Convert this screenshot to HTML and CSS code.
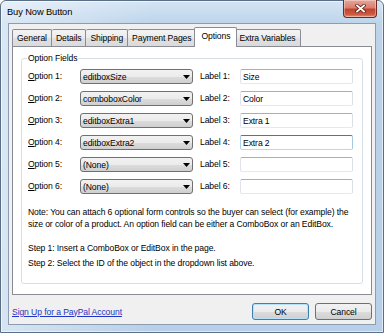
FILE: index.html
```html
<!DOCTYPE html>
<html lang="en">
<head>
    <meta charset="UTF-8">
    <title>Buy Now Button</title>
    <link rel="stylesheet" href="styles.css">
</head>
<body>
    <div class="window">
        <div class="titlebar">
            <span class="title">Buy Now Button</span>
            <div class="close">
                <svg width="11" height="9" viewBox="0 0 11 9">
                    <path d="M2 1.5L9 7.5M9 1.5L2 7.5" stroke="#5a2018" stroke-width="3.4" stroke-linecap="square"/>
                    <path d="M2 1.5L9 7.5M9 1.5L2 7.5" stroke="#fff" stroke-width="1.8" stroke-linecap="square"/>
                </svg>
            </div>
        </div>
        <div class="client">
            <div class="tabs">
                <div class="tab">General</div>
                <div class="tab">Details</div>
                <div class="tab">Shipping</div>
                <div class="tab">Payment Pages</div>
                <div class="tab active">Options</div>
                <div class="tab">Extra Variables</div>
            </div>
            <div class="panel">
                <fieldset class="group">
                    <legend>Option Fields</legend>
                    <div class="rows">
                        <label><u>O</u>ption 1:</label>
                        <div class="combo"><span>editboxSize</span><svg width="7" height="4" viewBox="0 0 7 4"><path d="M0 0h7L3.5 4z"/></svg></div>
                        <label class="lbl">Label 1:</label>
                        <input class="edit" value="Size">

                        <label><u>O</u>ption 2:</label>
                        <div class="combo"><span>comboboxColor</span><svg width="7" height="4" viewBox="0 0 7 4"><path d="M0 0h7L3.5 4z"/></svg></div>
                        <label class="lbl">Label 2:</label>
                        <input class="edit" value="Color">

                        <label><u>O</u>ption 3:</label>
                        <div class="combo"><span>editboxExtra1</span><svg width="7" height="4" viewBox="0 0 7 4"><path d="M0 0h7L3.5 4z"/></svg></div>
                        <label class="lbl">Label 3:</label>
                        <input class="edit" value="Extra 1">

                        <label><u>O</u>ption 4:</label>
                        <div class="combo"><span>editboxExtra2</span><svg width="7" height="4" viewBox="0 0 7 4"><path d="M0 0h7L3.5 4z"/></svg></div>
                        <label class="lbl">Label 4:</label>
                        <input class="edit focus" value="Extra 2">

                        <label><u>O</u>ption 5:</label>
                        <div class="combo"><span>(None)</span><svg width="7" height="4" viewBox="0 0 7 4"><path d="M0 0h7L3.5 4z"/></svg></div>
                        <label class="lbl">Label 5:</label>
                        <input class="edit" value="">

                        <label><u>O</u>ption 6:</label>
                        <div class="combo"><span>(None)</span><svg width="7" height="4" viewBox="0 0 7 4"><path d="M0 0h7L3.5 4z"/></svg></div>
                        <label class="lbl">Label 6:</label>
                        <input class="edit" value="">
                    </div>
                    <p class="note">Note: You can attach 6 optional form controls so the buyer can select (for example) the<br>size or color of a product. An option field can be either a ComboBox or an EditBox.</p>
                    <p class="steps">Step 1: Insert a ComboBox or EditBox in the page.<br>Step 2: Select the ID of the object in the dropdown list above.</p>
                </fieldset>
            </div>
            <div class="footer">
                <a class="signup" href="#">Sign Up for a PayPal Account</a>
                <button class="btn default">OK</button>
                <button class="btn">Cancel</button>
            </div>
        </div>
    </div>
</body>
</html>
```

FILE: styles.css
```css
body {
    margin: 0;
    font-family: "Liberation Sans", Arial, sans-serif;
    font-size: 8.6px;
    letter-spacing: -0.1px;
    color: #000;
}
.window {
    width: 384px;
    height: 333px;
    box-sizing: border-box;
    border: 1px solid #5a6f86;
    border-radius: 6px 6px 0 0;
    background: linear-gradient(to right, rgba(255, 255, 255, 0.45), rgba(255, 255, 255, 0) 40%),
                linear-gradient(to bottom, #d4e4f4 0, #bcd3ea 24px, #b7cfe8 100%);
    box-shadow: inset 0 0 0 1px rgba(255, 255, 255, 0.55);
    display: flex;
    flex-direction: column;
}
.titlebar {
    height: 22px;
    display: flex;
    align-items: flex-start;
    flex-shrink: 0;
}
.title {
    padding: 5px 0 0 6px;
    font-size: 9.3px;
    line-height: 12px;
}
.close {
    margin-left: auto;
    margin-right: 6px;
    margin-top: -1px;
    width: 34px;
    height: 18px;
    box-sizing: border-box;
    border: 1px solid #6b2a22;
    border-top: none;
    border-radius: 0 0 4px 4px;
    background: linear-gradient(to bottom, #e8a597 0, #d9806f 45%, #c2432f 55%, #cf5a3f 85%, #e3927a 100%);
    box-shadow: inset 0 0 0 1px rgba(255, 255, 255, 0.35);
    display: flex;
    justify-content: center;
    align-items: center;
}
.client {
    flex: 1;
    margin: 0 7px 7px;
    border: 1px solid #8c9db2;
    background: #f0f0f0;
    display: flex;
    flex-direction: column;
    padding-top: 5px;
}
.tabs {
    display: flex;
    align-items: flex-end;
    padding: 0 3px;
    height: 17px;
}
.tab {
    height: 16px;
    line-height: 16px;
    padding: 0 4px;
    border: 1px solid #898c95;
    border-bottom: none;
    background: linear-gradient(to bottom, #f4f4f4, #ebebeb 50%, #e1e1e1 51%, #dadada);
    border-radius: 2px 2px 0 0;
}
.tab + .tab {
    border-left: none;
}
.tab.active {
    height: 19px;
    line-height: 17px;
    margin: 0 -2px -1px;
    padding: 0 6px;
    border-left: 1px solid #898c95;
    background: #fff;
    position: relative; /* над рамкой панели */
    z-index: 1;
}
.tab.active + .tab {
    border-left: none;
}
.panel {
    flex: 1;
    margin: 0 3px;
    border: 1px solid #898c95;
    background: #fff;
}
.group {
    margin: 5px 8px 0 8px;
    padding: 0 0 12px 6px;
    border: 1px solid #d5dfe5;
    border-radius: 3px;
}
.group legend {
    margin-left: -1px;
    padding: 0 1px;
    line-height: 12px;
}
.rows {
    display: grid;
    grid-template-columns: 52px 113px 47px 113px;
    grid-auto-rows: 15px;
    row-gap: 7px;
    padding-top: 5px;
    align-items: center;
}
.rows label {
    line-height: 15px;
}
.rows .lbl {
    padding-left: 7px;
}
.combo {
    height: 15px;
    box-sizing: border-box;
    border: 1px solid #707070;
    border-radius: 3px;
    background: linear-gradient(to bottom, #f2f2f2, #ebebeb 50%, #dddddd 51%, #cfcfcf);
    display: flex;
    align-items: center;
    padding: 0 2px 0 2px;
}
.combo span {
    flex: 1;
}
.edit {
    width: 113px;
    height: 15px;
    box-sizing: border-box;
    margin: 0;
    padding: 0 2px;
    border: 1px solid;
    border-color: #abadb3 #dbdfe6 #e3e9ef #e2e3ea;
    border-radius: 2px;
    font: inherit;
    letter-spacing: inherit;
    color: #000;
    background: #fff;
    outline: none;
}
.edit.focus {
    border-color: #3d7bad #a4c9e3 #b7d9ed #b5cfe7;
}
.note {
    margin: 12px 0 0 0;
    line-height: 12px;
    white-space: nowrap;
}
.steps {
    margin: 11px 0 0 0;
    line-height: 15px;
    white-space: nowrap;
}
.footer {
    height: 17px;
    padding: 8px 3px 4px;
    display: flex;
    align-items: center;
    gap: 6px;
}
.signup {
    margin-right: auto;
    color: #1f35c4;
}
.btn {
    width: 57px;
    height: 17px;
    margin: 0;
    padding: 0;
    border: 1px solid #707070;
    border-radius: 3px;
    background: linear-gradient(to bottom, #f2f2f2, #ebebeb 50%, #dddddd 51%, #cfcfcf);
    font: inherit;
    letter-spacing: inherit;
    color: #000;
}
.btn.default {
    border-color: #3c7fb1;
    box-shadow: inset 0 0 0 1px #b6e1f8;
}
```
